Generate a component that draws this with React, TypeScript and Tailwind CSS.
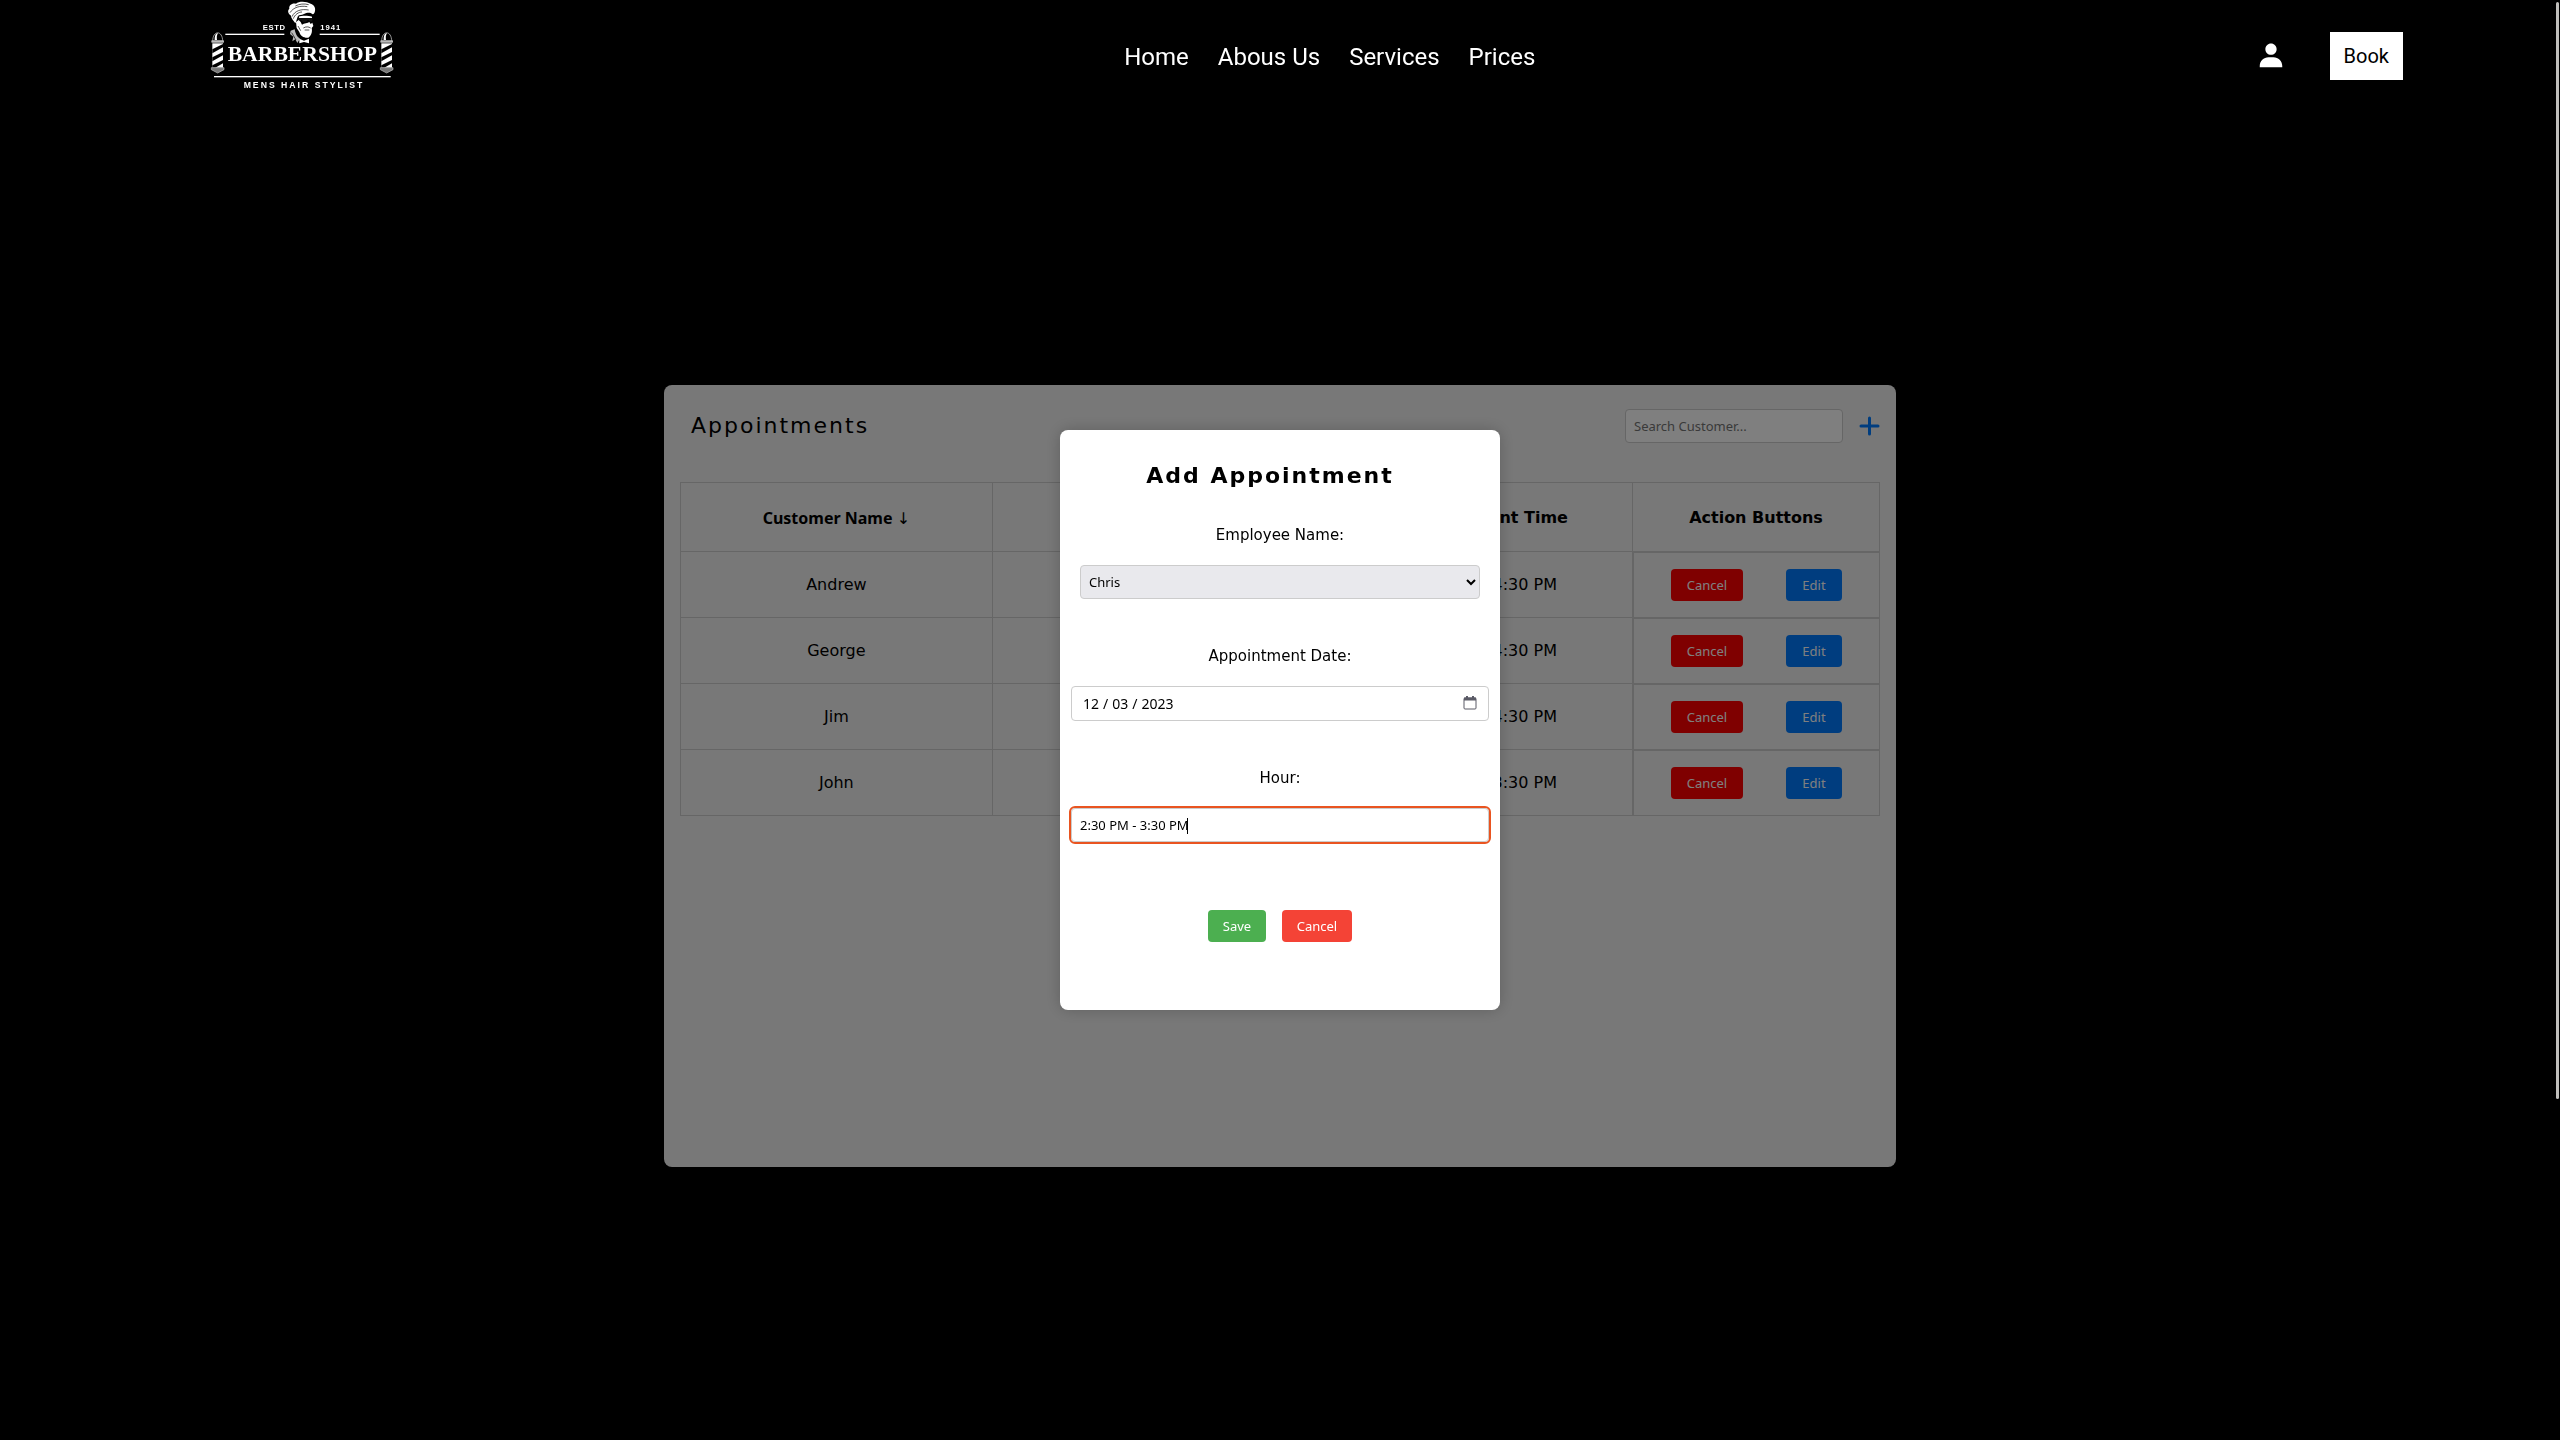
import { BiSolidUser } from "react-icons/bi";

const navLinks = ["Home", "Abous Us", "Services", "Prices"];

const appointments = [
  { customer: "Andrew", date: "12/03/2023", time: "3:30 PM - 4:30 PM" },
  { customer: "George", date: "12/03/2023", time: "3:30 PM - 4:30 PM" },
  { customer: "Jim", date: "12/03/2023", time: "3:30 PM - 4:30 PM" },
  { customer: "John", date: "12/03/2023", time: "2:30 PM - 3:30 PM" },
];

function BarberPole({ x }: { x: number }) {
  return (
    <g transform={`translate(${x} 96)`}>
      <path d="M4 28C4 -6 34 -6 34 28Z" fill="#000" stroke="#ddd" strokeWidth="2" />
      <path d="M10 24C10 8 14 4 20 4C16 10 16 16 17 24Z" fill="#fff" />
      <rect x="0" y="25" width="38" height="7" rx="2" fill="#bbb" />
      <rect x="3" y="34" width="32" height="73" fill="#fff" />
      <path d="M3 52L35 36V46L3 64ZM3 76L35 60V70L3 88ZM3 100L35 84V94L12 107H3Z" fill="#000" />
      <path d="M0 107H38V113L19 123L0 113Z" fill="#777" stroke="#bbb" strokeWidth="2" />
    </g>
  );
}

function Logo() {
  return (
    <svg viewBox="12 0 600 300" className="h-[100px] w-[200px]" role="img" aria-label="Barbershop, mens hair stylist">
      <g fill="#fff">
        <rect x="76" y="101" width="177" height="4" />
        <rect x="359" y="101" width="180" height="4" />
        <rect x="42" y="228" width="530" height="4" />
        <g fontFamily="'Liberation Sans', Arial, sans-serif" fontWeight="700">
          <text x="188" y="90" fontSize="23" letterSpacing="2">ESTD</text>
          <text x="361" y="90" fontSize="23" letterSpacing="3">1941</text>
          <text x="131" y="263" fontSize="26" letterSpacing="6">MENS HAIR STYLIST</text>
        </g>
        <text x="83" y="183" fontFamily="'Liberation Serif', 'Times New Roman', serif" fontWeight="700" fontSize="65">
          BARBERSHOP
        </text>
      </g>
      <BarberPole x={34} />
      <BarberPole x={541} />
      <g fill="#fff">
        <path d="M272 46C264 40 262 32 268 26C266 16 276 8 288 11C298 2 320 4 332 11C343 15 347 24 345 33C344 40 340 44 337 42C330 36 320 38 312 42C304 46 298 44 294 48C290 56 290 62 286 70C280 62 274 56 272 46Z" />
        <path d="M296 50C306 46 324 46 336 50V54H298Z" />
        <path d="M288 66L296 60L302 66L306 74C312 70 324 70 328 66L332 72L337 68L340 78L335 84C338 96 333 108 325 113C313 115 301 108 298 96L290 84Z" />
        <path d="M272 92L284 88C287 104 293 112 300 116L292 129L286 118L277 124L280 110L270 102Z" fill="#bbb" />
        <path d="M298 116L312 122L327 116V130L312 126L298 130Z" />
      </g>
      <path d="M306 55H337V63C333 67 328 65 326 60H322C320 68 309 69 306 62L292 58V55Z" fill="#111" />
      <g fill="none" stroke="#000" strokeWidth="2">
        <path d="M270 38C280 22 300 16 322 20M276 50C284 32 304 26 326 30M286 18C298 12 312 10 326 14M280 56C284 44 296 36 306 36" />
        <path d="M310 84C318 79 326 80 332 84M314 90H328M275 98L288 120M294 78L302 92" />
      </g>
    </svg>
  );
}

function Header() {
  return (
    <header className="relative z-20 flex h-28 items-center justify-between pr-[157px] pl-[204px] font-[Roboto,sans-serif] text-white">
      <a href="#home" className="self-start">
        <Logo />
      </a>
      <nav className="flex gap-[29px] pt-0.5 text-2xl">
        {navLinks.map((link) => (
          <a key={link} href="#">
            {link}
          </a>
        ))}
      </nav>
      <div className="flex items-center gap-11">
        <a href="#account" aria-label="Account">
          <BiSolidUser size={30} />
        </a>
        <button className="h-12 bg-white px-3.5 text-xl text-black">Book</button>
      </div>
    </header>
  );
}

function AppointmentsCard() {
  return (
    <main className="mx-auto mt-[273px] min-h-[782px] w-[1232px] max-w-full rounded-lg bg-[#f0f0f0] p-4">
      <div className="flex h-[81px] items-start justify-between pl-[11px]">
        <h1 className="mt-[7px] text-[22px] leading-9 tracking-[2px]">Appointments</h1>
        <div className="mt-2 flex items-center gap-4">
          <input
            type="search"
            aria-label="Search Customer"
            placeholder="Search Customer..."
            className="h-[34px] w-[218px] rounded-sm border border-[#ccc] bg-white px-2 font-['Noto_Sans',sans-serif] text-[13px] placeholder:text-[#757575]"
          />
          <button aria-label="Add appointment" className="text-[#007bff]">
            <svg viewBox="0 0 21 21" className="size-[21px]" fill="none" stroke="currentColor" strokeWidth="3" strokeLinecap="round">
              <path d="M10.5 2V18M2 10H19" />
            </svg>
          </button>
        </div>
      </div>
      <table className="w-full table-fixed border-collapse text-center">
        <colgroup>
          <col className="w-[26%]" />
          <col />
          <col className="w-[296px]" />
          <col className="w-[247px]" />
        </colgroup>
        <thead>
          <tr className="h-[69px]">
            <th className="border border-[#ccc] pt-0.5">
              <button className="font-['Noto_Sans','DejaVu_Sans',sans-serif] font-bold">
                Customer Name <span className="font-normal">↓</span>
              </button>
            </th>
            <th className="border border-[#ccc] pt-0.5">Appointment Date</th>
            <th className="border border-[#ccc] pt-0.5">Appointment Time</th>
            <th className="border border-[#ccc] pt-0.5">Action Buttons</th>
          </tr>
        </thead>
        <tbody>
          {appointments.map((a) => (
            <tr key={a.customer} className="h-[66px]">
              <td className="border border-[#ccc]">{a.customer}</td>
              <td className="border border-[#ccc]">{a.date}</td>
              <td className="border border-[#ccc]">{a.time}</td>
              <td className="border border-[#ccc] p-0">
                <div className="flex h-[65px] items-center justify-center gap-[43px] border-t border-l border-[#ccc] font-['Noto_Sans',sans-serif] text-[13px] text-white">
                  <button className="h-8 w-[72px] rounded-sm bg-[#ff0000] pt-px">Cancel</button>
                  <button className="h-8 w-14 rounded-sm bg-[#007bff] pt-px">Edit</button>
                </div>
              </td>
            </tr>
          ))}
        </tbody>
      </table>
    </main>
  );
}

function AddAppointmentDialog() {
  return (
    <div className="fixed inset-0 z-10 flex items-center justify-center bg-black/50">
      <form
        role="dialog"
        aria-labelledby="dialog-title"
        className="flex w-[440px] flex-col items-center rounded-lg bg-white pt-7 pb-[68px] shadow-[0_0_16px_rgba(0,0,0,0.2)]"
      >
        <h2 id="dialog-title" className="mb-[29px] pr-5 text-[22px] leading-9 font-bold tracking-[2px]">
          Add Appointment
        </h2>

        <label htmlFor="employee" className="mb-[18px] text-[15px] leading-6">
          Employee Name:
        </label>
        <div className="relative mb-[45px] w-[400px]">
          <select
            id="employee"
            className="h-[34px] w-full appearance-none rounded-sm border border-[#ccc] bg-[#e9e9ed] px-2 pt-px font-['Noto_Sans',sans-serif] text-[13px]"
          >
            <option>Chris</option>
          </select>
          <svg viewBox="0 0 10 10" className="pointer-events-none absolute top-3 right-1 size-2.5" fill="none" stroke="#000" strokeWidth="2">
            <path d="M1 3L5 7L9 3" />
          </svg>
        </div>

        <label htmlFor="date" className="mb-[18px] text-[15px] leading-6">
          Appointment Date:
        </label>
        <div className="relative mb-[45px] w-[418px]">
          <input
            id="date"
            type="date"
            defaultValue="2023-12-03"
            className="block h-[35px] w-full rounded-sm border border-[#ccc] bg-white px-2.5 font-['Noto_Sans',sans-serif] text-sm [&::-webkit-calendar-picker-indicator]:opacity-0 [&::-webkit-datetime-edit-text]:px-[3px]"
          />
          <svg viewBox="0 0 14 14" className="pointer-events-none absolute top-2.5 right-3 size-3.5" fill="none" stroke="#5b5b66">
            <rect x="1" y="2" width="12" height="11" rx="1" />
            <path d="M1 3H13" strokeWidth="3" />
            <path d="M4 0V2M10 0V2" strokeWidth="2" />
          </svg>
        </div>

        <label htmlFor="hour" className="mb-[18px] text-[15px] leading-6">
          Hour:
        </label>
        <div className="relative mb-[68px] w-[418px]">
          <input
            id="hour"
            defaultValue="2:30 PM - 3:30 PM"
            className="block h-[34px] w-full rounded-sm border border-[#ccc] px-2 font-['Noto_Sans',sans-serif] text-[13px] outline-2 outline-[#e95420]"
          />
          <span className="absolute top-2.5 left-[116px] h-4 w-px bg-black" />
        </div>

        <div className="flex gap-4 font-['Noto_Sans',sans-serif] text-[13px] text-white">
          <button type="button" className="h-8 w-[58px] rounded-sm bg-[#4caf50] pt-px">
            Save
          </button>
          <button type="button" className="h-8 w-[70px] rounded-sm bg-[#f44336] pt-px">
            Cancel
          </button>
        </div>
      </form>
    </div>
  );
}

export default function App() {
  return (
    <div className="min-h-screen bg-black font-['DejaVu_Sans',sans-serif] text-base text-black">
      <Header />
      <AppointmentsCard />
      <AddAppointmentDialog />
      <div className="fixed top-0.5 right-px z-30 h-[76.2vh] w-[3px] rounded-full bg-[#c0bfbc]" />
    </div>
  );
}
